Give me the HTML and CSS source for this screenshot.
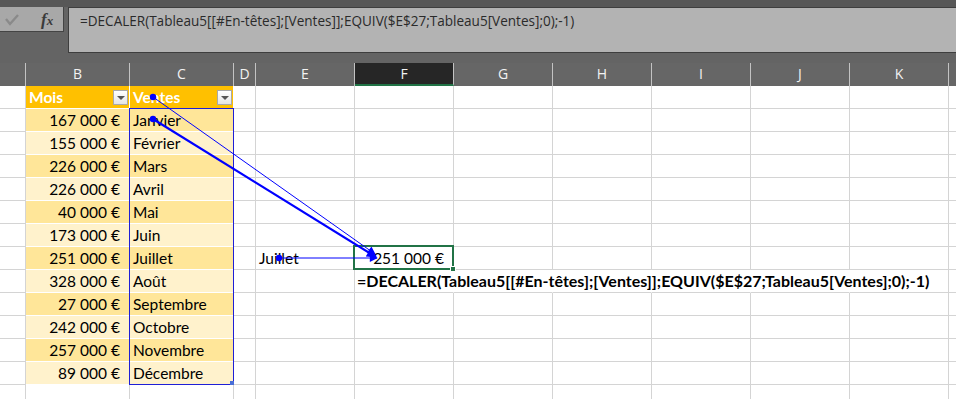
FILE: index.html
```html
<!DOCTYPE html>
<html lang="fr">
<head>
<meta charset="utf-8">
<title>Excel</title>
<link rel="stylesheet" href="styles.css">
</head>
<body>
<div class="app">
  <div class="topband"></div>
  <div class="fbar">
    <div class="fbtns">
      <svg class="check" width="22" height="25" viewBox="0 0 22 25"><polyline points="5,12 9,17 17,8" fill="none" stroke="#8a8a8a" stroke-width="2.4"/></svg>
      <span class="fx"><i>f</i><span class="x">x</span></span>
    </div>
    <div class="finput">=DECALER(Tableau5[[#En-têtes];[Ventes]];EQUIV($E$27;Tableau5[Ventes];0);-1)</div>
  </div>
  <div class="colheads">
    <div class="ch w-a"></div>
    <div class="ch w-b">B</div>
    <div class="ch w-c">C</div>
    <div class="ch w-d">D</div>
    <div class="ch w-e">E</div>
    <div class="ch w-f sel">F</div>
    <div class="ch w-g">G</div>
    <div class="ch w-g">H</div>
    <div class="ch w-g">I</div>
    <div class="ch w-g">J</div>
    <div class="ch w-g">K</div>
    <div class="ch w-z"></div>
  </div>
  <div class="sheet">
    <div class="row">
      <div class="c w-a"></div>
      <div class="c w-b th"><span>Mois</span><span class="dd"></span></div>
      <div class="c w-c th"><span>Ventes</span><span class="dd"></span></div>
      <div class="c w-d"></div><div class="c w-e"></div><div class="c w-f"></div><div class="c w-g"></div><div class="c w-g"></div><div class="c w-g"></div><div class="c w-g"></div><div class="c w-g"></div><div class="c w-z"></div>
    </div>
    <div class="row">
      <div class="c w-a"></div><div class="c w-b td dark num">167 000 €</div><div class="c w-c td dark">Janvier</div>
      <div class="c w-d"></div><div class="c w-e"></div><div class="c w-f"></div><div class="c w-g"></div><div class="c w-g"></div><div class="c w-g"></div><div class="c w-g"></div><div class="c w-g"></div><div class="c w-z"></div>
    </div>
    <div class="row">
      <div class="c w-a"></div><div class="c w-b td light num">155 000 €</div><div class="c w-c td light">Février</div>
      <div class="c w-d"></div><div class="c w-e"></div><div class="c w-f"></div><div class="c w-g"></div><div class="c w-g"></div><div class="c w-g"></div><div class="c w-g"></div><div class="c w-g"></div><div class="c w-z"></div>
    </div>
    <div class="row">
      <div class="c w-a"></div><div class="c w-b td dark num">226 000 €</div><div class="c w-c td dark">Mars</div>
      <div class="c w-d"></div><div class="c w-e"></div><div class="c w-f"></div><div class="c w-g"></div><div class="c w-g"></div><div class="c w-g"></div><div class="c w-g"></div><div class="c w-g"></div><div class="c w-z"></div>
    </div>
    <div class="row">
      <div class="c w-a"></div><div class="c w-b td light num">226 000 €</div><div class="c w-c td light">Avril</div>
      <div class="c w-d"></div><div class="c w-e"></div><div class="c w-f"></div><div class="c w-g"></div><div class="c w-g"></div><div class="c w-g"></div><div class="c w-g"></div><div class="c w-g"></div><div class="c w-z"></div>
    </div>
    <div class="row">
      <div class="c w-a"></div><div class="c w-b td dark num">40 000 €</div><div class="c w-c td dark">Mai</div>
      <div class="c w-d"></div><div class="c w-e"></div><div class="c w-f"></div><div class="c w-g"></div><div class="c w-g"></div><div class="c w-g"></div><div class="c w-g"></div><div class="c w-g"></div><div class="c w-z"></div>
    </div>
    <div class="row">
      <div class="c w-a"></div><div class="c w-b td light num">173 000 €</div><div class="c w-c td light">Juin</div>
      <div class="c w-d"></div><div class="c w-e"></div><div class="c w-f"></div><div class="c w-g"></div><div class="c w-g"></div><div class="c w-g"></div><div class="c w-g"></div><div class="c w-g"></div><div class="c w-z"></div>
    </div>
    <div class="row">
      <div class="c w-a"></div><div class="c w-b td dark num">251 000 €</div><div class="c w-c td dark">Juillet</div>
      <div class="c w-d"></div><div class="c w-e">Juillet</div><div class="c w-f num">251 000 €</div><div class="c w-g"></div><div class="c w-g"></div><div class="c w-g"></div><div class="c w-g"></div><div class="c w-g"></div><div class="c w-z"></div>
    </div>
    <div class="row">
      <div class="c w-a"></div><div class="c w-b td light num">328 000 €</div><div class="c w-c td light">Août</div>
      <div class="c w-d"></div><div class="c w-e"></div><div class="c w-f nob over">=DECALER(Tableau5[[#En-têtes];[Ventes]];EQUIV($E$27;Tableau5[Ventes];0);-1)</div><div class="c w-g nob"></div><div class="c w-g nob"></div><div class="c w-g nob"></div><div class="c w-g nob"></div><div class="c w-g"></div><div class="c w-z"></div>
    </div>
    <div class="row">
      <div class="c w-a"></div><div class="c w-b td dark num">27 000 €</div><div class="c w-c td dark">Septembre</div>
      <div class="c w-d"></div><div class="c w-e"></div><div class="c w-f"></div><div class="c w-g"></div><div class="c w-g"></div><div class="c w-g"></div><div class="c w-g"></div><div class="c w-g"></div><div class="c w-z"></div>
    </div>
    <div class="row">
      <div class="c w-a"></div><div class="c w-b td light num">242 000 €</div><div class="c w-c td light">Octobre</div>
      <div class="c w-d"></div><div class="c w-e"></div><div class="c w-f"></div><div class="c w-g"></div><div class="c w-g"></div><div class="c w-g"></div><div class="c w-g"></div><div class="c w-g"></div><div class="c w-z"></div>
    </div>
    <div class="row">
      <div class="c w-a"></div><div class="c w-b td dark num">257 000 €</div><div class="c w-c td dark">Novembre</div>
      <div class="c w-d"></div><div class="c w-e"></div><div class="c w-f"></div><div class="c w-g"></div><div class="c w-g"></div><div class="c w-g"></div><div class="c w-g"></div><div class="c w-g"></div><div class="c w-z"></div>
    </div>
    <div class="row">
      <div class="c w-a"></div><div class="c w-b td light num">89 000 €</div><div class="c w-c td light">Décembre</div>
      <div class="c w-d"></div><div class="c w-e"></div><div class="c w-f"></div><div class="c w-g"></div><div class="c w-g"></div><div class="c w-g"></div><div class="c w-g"></div><div class="c w-g"></div><div class="c w-z"></div>
    </div>
    <div class="row">
      <div class="c w-a"></div><div class="c w-b"></div><div class="c w-c"></div>
      <div class="c w-d"></div><div class="c w-e"></div><div class="c w-f"></div><div class="c w-g"></div><div class="c w-g"></div><div class="c w-g"></div><div class="c w-g"></div><div class="c w-g"></div><div class="c w-z"></div>
    </div>
  </div>
  <div class="selbox"><span class="handle"></span></div>
  <svg class="arrows" width="956" height="399" viewBox="0 0 956 399">
    <defs>
      <marker id="ah" viewBox="0 0 10 10" refX="9" refY="5" markerWidth="10" markerHeight="8" markerUnits="userSpaceOnUse" orient="auto">
        <path d="M0,0 L10,5 L0,10 z" fill="#0000ff"/>
      </marker>
      <marker id="ah2" viewBox="0 0 10 10" refX="9" refY="5" markerWidth="12" markerHeight="10" markerUnits="userSpaceOnUse" orient="auto">
        <path d="M0,0 L10,5 L0,10 z" fill="#0000ff"/>
      </marker>
    </defs>
    <rect x="129.5" y="108.5" width="104" height="276" fill="none" stroke="#1f1fd6" stroke-width="1"/>
    <rect x="230" y="381" width="4" height="4" fill="#4a6fd8"/>
    <line x1="153" y1="97" x2="375" y2="254" stroke="#0000ff" stroke-width="1" marker-end="url(#ah)"/>
    <line x1="153" y1="119" x2="376" y2="257" stroke="#0000ff" stroke-width="2.2" marker-end="url(#ah2)"/>
    <line x1="279" y1="258" x2="377" y2="258" stroke="#0000ff" stroke-width="1" marker-end="url(#ah)"/>
    <circle cx="153" cy="97" r="3.2" fill="#0000ff"/>
    <circle cx="153" cy="119" r="3.2" fill="#0000ff"/>
    <circle cx="279" cy="258" r="3.2" fill="#0000ff"/>
  </svg>
</div>
</body>
</html>
```
FILE: styles.css
```css
html, body {
  margin: 0;
  padding: 0;
}
body {
  width: 956px;
  height: 399px;
  overflow: hidden;
  background: #ffffff;
  font-family: "Lato", "Liberation Sans", sans-serif;
}
.app {
  position: relative;
  width: 956px;
  height: 399px;
  overflow: hidden;
  background: #646464;
}
.topband {
  height: 7px;
  background: #575757;
}
.fbar {
  display: flex;
  align-items: flex-start;
  height: 46px;
  background: #646464;
}
.fbtns {
  display: flex;
  align-items: center;
  width: 64px;
  height: 25px;
  background: #a8a8a8;
  border-right: 1px solid #444444;
  border-bottom: 1px solid #444444;
  box-sizing: border-box;
  padding-left: 1px;
}
.check {
  display: block;
}
.fx {
  margin-left: 18px;
  font-family: "Liberation Serif", serif;
  font-weight: bold;
  color: #3a3a3a;
  font-size: 17px;
  line-height: 1;
}
.fx .x {
  font-style: italic;
  font-size: 13px;
}
.finput {
  margin-left: 4px;
  flex: 1;
  height: 46px;
  box-sizing: border-box;
  background: #b3b3b3;
  border: 1px solid #3e3e3e;
  border-right: none;
  padding: 3px 0 0 11px;
  font-family: "Open Sans", "Noto Sans", sans-serif;
  font-size: 13.55px;
  line-height: 20px;
  color: #2a2a2a;
  white-space: nowrap;
}
.colheads {
  display: flex;
  margin-top: 10px;
  height: 23px;
  background: #666666;
}
.ch {
  flex: none;
  box-sizing: border-box;
  height: 23px;
  border-right: 1px solid #c3c3c3;
  text-align: center;
  font-family: "Open Sans", "Noto Sans", sans-serif;
  font-size: 14px;
  line-height: 22px;
  color: #f3f3f3;
}
.ch.sel {
  background: #262626;
  border-bottom: 2px solid #217346;
  line-height: 21px;
}
.ch.w-z { border-right: none; }
.w-a { width: 26px; }
.w-b { width: 104px; }
.w-c { width: 104px; }
.w-d { width: 22px; }
.w-e { width: 99px; }
.w-f { width: 99px; }
.w-g { width: 99px; }
.w-z { width: 8px; }

.sheet {
  background: #ffffff;
}
.row {
  display: flex;
  height: 23px;
}
.c {
  flex: none;
  box-sizing: border-box;
  height: 23px;
  border-right: 1px solid #d4d4d4;
  border-bottom: 1px solid #d4d4d4;
  font-size: 15.5px;
  line-height: 22px;
  color: #000000;
  padding-left: 3px;
  white-space: nowrap;
}
.c.nob { border-right-color: transparent; }
.c.w-z { border-right: none; }
.c.num {
  text-align: right;
  padding-right: 9px;
}
.th {
  background: #ffc000;
  color: #ffffff;
  font-weight: bold;
  border-right: 1px solid #ffffff;
  border-bottom: 1px solid #ffffff;
  display: flex;
  align-items: center;
  justify-content: space-between;
  padding-right: 1px;
}
.th .dd {
  position: relative;
  width: 15px;
  height: 15px;
  box-sizing: border-box;
  border: 1px solid #a9a9a9;
  background: linear-gradient(#ffffff, #e4e4e4);
}
.th .dd::after {
  content: "";
  position: absolute;
  left: 3px;
  top: 5px;
  border-left: 4px solid transparent;
  border-right: 4px solid transparent;
  border-top: 4px solid #555555;
}
.td {
  border-right: 1px solid #ffffff;
  border-bottom: 1px solid #ffffff;
}
.td.dark { background: #ffe699; }
.td.light { background: #fff2cc; }
.over {
  overflow: visible;
  font-weight: bold;
  font-size: 16px;
  padding-left: 2px;
}
.selbox {
  position: absolute;
  left: 353px;
  top: 245px;
  width: 101px;
  height: 25px;
  box-sizing: border-box;
  border: 2px solid #217346;
}
.handle {
  position: absolute;
  right: -4px;
  bottom: -4px;
  width: 6px;
  height: 6px;
  background: #217346;
  border: 1px solid #ffffff;
  box-sizing: border-box;
}
.arrows {
  position: absolute;
  left: 0;
  top: 0;
  pointer-events: none;
}
```
